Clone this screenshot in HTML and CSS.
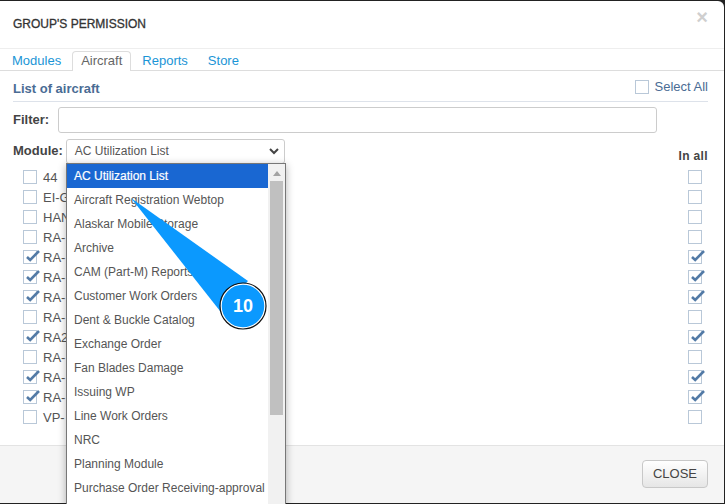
FILE: index.html
```html
<!DOCTYPE html>
<html lang="en">
<head>
<meta charset="utf-8">
<title>Group's permission</title>
<link rel="stylesheet" href="styles.css">
</head>
<body>
<svg class="defs" width="0" height="0"><symbol id="tick" viewBox="0 0 16 16"><path d="M3 8 L6.2 11 L15 2" fill="none" stroke="#527aa6" stroke-width="2.6"/></symbol></svg>
<div class="modal">
  <header class="head"><h1 class="title">GROUP'S PERMISSION</h1><span class="x">×</span></header>
  <nav class="tabs">
    <a class="tab">Modules</a><a class="tab on">Aircraft</a><a class="tab">Reports</a><a class="tab">Store</a>
  </nav>
  <main class="body">
    <div class="section"><h2 class="stitle">List of aircraft</h2><label class="all"><span class="cb"></span>Select All</label></div>
    <div class="filter"><b class="lbl">Filter:</b><span class="input"></span></div>
    <div class="module">
      <b class="lbl">Module:</b>
      <span class="select">AC Utilization List<svg class="chev" width="10" height="7" viewBox="0 0 10 7"><path d="M1 1 L5 5 L9 1" fill="none" stroke="#444" stroke-width="2"/></svg></span>
      <b class="inall">In all</b>
    </div>
    <ul class="rows">
      <li class="row"><span class="cb"></span><span class="name">44</span><span class="cb end"></span></li>
      <li class="row"><span class="cb"></span><span class="name">EI-G</span><span class="cb end"></span></li>
      <li class="row"><span class="cb"></span><span class="name">HAN</span><span class="cb end"></span></li>
      <li class="row"><span class="cb"></span><span class="name">RA-</span><span class="cb end"></span></li>
      <li class="row"><span class="cb"><svg class="tick"><use href="#tick"/></svg></span><span class="name">RA-</span><span class="cb end"><svg class="tick"><use href="#tick"/></svg></span></li>
      <li class="row"><span class="cb"><svg class="tick"><use href="#tick"/></svg></span><span class="name">RA-</span><span class="cb end"><svg class="tick"><use href="#tick"/></svg></span></li>
      <li class="row"><span class="cb"><svg class="tick"><use href="#tick"/></svg></span><span class="name">RA-</span><span class="cb end"><svg class="tick"><use href="#tick"/></svg></span></li>
      <li class="row"><span class="cb"></span><span class="name">RA-</span><span class="cb end"></span></li>
      <li class="row"><span class="cb"><svg class="tick"><use href="#tick"/></svg></span><span class="name">RA2</span><span class="cb end"><svg class="tick"><use href="#tick"/></svg></span></li>
      <li class="row"><span class="cb"></span><span class="name">RA-</span><span class="cb end"></span></li>
      <li class="row"><span class="cb"><svg class="tick"><use href="#tick"/></svg></span><span class="name">RA-</span><span class="cb end"><svg class="tick"><use href="#tick"/></svg></span></li>
      <li class="row"><span class="cb"><svg class="tick"><use href="#tick"/></svg></span><span class="name">RA-</span><span class="cb end"><svg class="tick"><use href="#tick"/></svg></span></li>
      <li class="row"><span class="cb"></span><span class="name">VP-</span><span class="cb end"></span></li>
    </ul>
  </main>
  <footer class="foot"><span class="close">CLOSE</span></footer>
</div>
<div class="drop">
  <ul class="opts">
    <li class="opt sel">AC Utilization List</li>
    <li class="opt">Aircraft Registration Webtop</li>
    <li class="opt">Alaskar Mobile Storage</li>
    <li class="opt">Archive</li>
    <li class="opt">CAM (Part-M) Reports</li>
    <li class="opt">Customer Work Orders</li>
    <li class="opt">Dent &amp; Buckle Catalog</li>
    <li class="opt">Exchange Order</li>
    <li class="opt">Fan Blades Damage</li>
    <li class="opt">Issuing WP</li>
    <li class="opt">Line Work Orders</li>
    <li class="opt">NRC</li>
    <li class="opt">Planning Module</li>
    <li class="opt">Purchase Order Receiving-approval</li>
  </ul>
  <div class="bar"><svg class="up" width="8" height="5" viewBox="0 0 8 5"><path d="M4 0 L8 5 L0 5 Z" fill="#a3a3a3"/></svg><span class="thumb"></span></div>
</div>
<svg class="callout" width="725" height="504" viewBox="0 0 725 504">
  <path d="M131 198 L248 281 L220 311 Z" fill="#0b99fe"/>
  <circle cx="243" cy="306" r="22" fill="#0b99fe" stroke="#fff" stroke-width="1.5"/>
  <circle cx="243" cy="306" r="23" fill="none" stroke="#111" stroke-width="1.2"/>
</svg>
<span class="num">10</span>
</body>
</html>
```
FILE: styles.css
```css
* { box-sizing: border-box; }
html, body { margin: 0; height: 504px; overflow: hidden; }
body { background: #222; font-family: "Liberation Sans", Arial, sans-serif; position: relative; }
.defs { position: absolute; }
.modal { margin-top: 1px; width: 724px; height: 502px; background: #fff; border-radius: 0 6px 0 0; display: flex; flex-direction: column; overflow: hidden; }
.head { height: 48px; flex: none; border-bottom: 1px solid #eee; display: flex; justify-content: space-between; padding: 15px 16px 0 13px; }
.title { margin: 0; font-size: 12px; line-height: 16px; font-weight: 400; color: #333; -webkit-text-stroke: .3px #333; }
.x { font-size: 20px; line-height: 14px; font-weight: 700; color: #cfcfcf; margin-top: -6px; }
.tabs { flex: none; height: 22px; display: flex; padding: 2px 0 0 3px; border-bottom: 1px solid #ddd; align-items: stretch; }
.tab { font-size: 13px; line-height: 18px; padding: 0 8px; margin-right: 2px; color: #1b95d6; border: 1px solid transparent; border-bottom: 0; }
.tab.on { color: #666; background: #fff; border-color: #ddd; border-radius: 4px 4px 0 0; height: 20px; }
.body { flex: 1; padding: 0 16px 0 13px; min-height: 0; }
.section { height: 31px; display: flex; justify-content: space-between; align-items: center; border-bottom: 1px solid #dde2ea; padding-top: 5px; }
.stitle { margin: 0; font-size: 13px; font-weight: 700; color: #4a6c94; }
.all { display: flex; align-items: center; gap: 6px; font-size: 13px; color: #4a6c94; margin-top: -4px; }
.cb { width: 14px; height: 14px; border: 1px solid #b9c8d8; background: #fff; flex: none; position: relative; display: block; }
.tick { position: absolute; left: 0; top: -2px; width: 16px; height: 16px; }
.filter { display: flex; align-items: center; gap: 9px; margin-top: 5px; height: 26px; }
.lbl { font-size: 13px; color: #444; padding-bottom: 2px; }
.input { display: block; width: 599px; height: 26px; border: 1px solid #ccc; border-radius: 3px; background: #fff; }
.module { display: flex; align-items: center; margin-top: 6px; height: 25px; position: relative; }
.select { margin-left: 3px; width: 219px; height: 25px; border: 1px solid #ccc; border-radius: 3px; font-size: 12px; line-height: 22px; color: #555; padding: 0 5px 2px 8px; display: flex; align-items: center; justify-content: space-between; }
.chev { margin-top: 2px; }
.inall { margin-left: auto; margin-top: 3px; font-size: 12px; color: #444; letter-spacing: .35px; padding-top: 6px; }
.rows { list-style: none; margin: 3px 0 0; padding: 0 0 0 10px; }
.row { height: 20px; display: flex; align-items: center; font-size: 13px; color: #555; }
.name { margin-left: 6px; }
.end { margin-left: auto; margin-right: 6px; }
.foot { flex: none; height: 58px; background: #f5f5f5; border-top: 1px solid #e3e3e3; display: flex; justify-content: flex-end; align-items: flex-start; padding: 14px 16px 0 0; }
.close { width: 66px; height: 28px; border: 1px solid #c8c8c8; border-radius: 4px; background: linear-gradient(#fff, #e6e6e6); font-size: 13px; line-height: 26px; text-align: center; color: #444; }
.drop { position: absolute; left: 66px; top: 163px; width: 220px; height: 345px; border: 1px solid #777; background: #fff; display: flex; box-shadow: 0 2px 8px rgba(0,0,0,.3); }
.opts { list-style: none; margin: 0; padding: 0; width: 201px; flex: none; }
.opt { height: 24px; line-height: 24px; padding-left: 7px; font-size: 12px; color: #555; white-space: nowrap; }
.sel { background: #1967d2; color: #fff; -webkit-text-stroke: .2px #fff; }
.bar { flex: 1; background: #f1f1f1; position: relative; padding: 17px 2px 0 2px; }
.up { position: absolute; left: 5px; top: 7px; }
.thumb { display: block; height: 234px; background: #c0c0c0; }
.callout { position: absolute; left: 0; top: 0; }
.num { position: absolute; left: 220px; top: 296px; width: 46px; text-align: center; color: #fff; font-size: 18px; line-height: 20px; font-weight: 700; }
```
